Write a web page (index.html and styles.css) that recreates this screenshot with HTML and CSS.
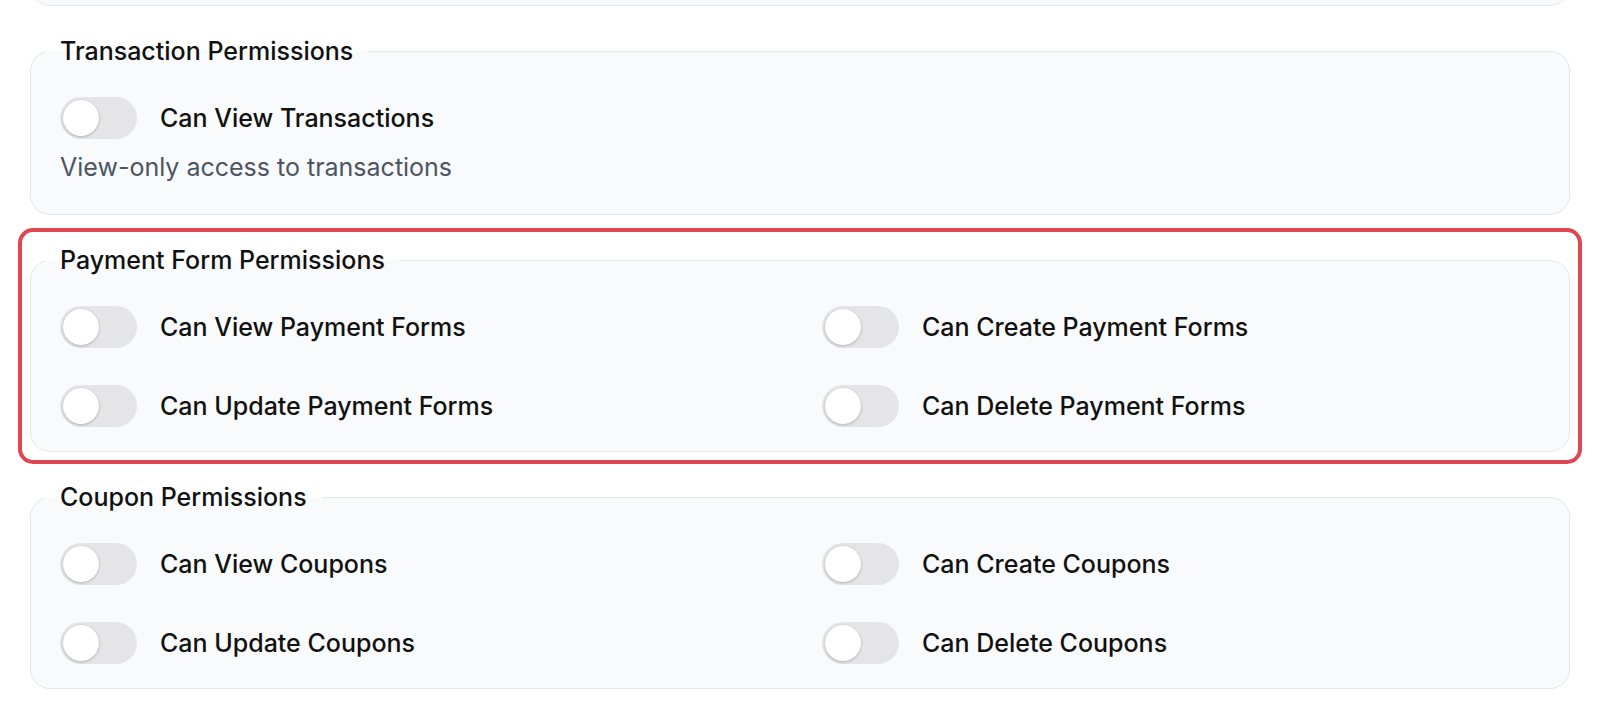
FILE: index.html
```html
<!DOCTYPE html>
<html lang="en">
<head>
<meta charset="utf-8">
<title>Permissions</title>
<link rel="stylesheet" href="styles.css">
</head>
<body>
<div class="page">
  <div class="prev-box"></div>

  <div class="section">
    <fieldset class="group">
      <legend>Transaction Permissions</legend>
      <div class="perm">
        <span class="toggle"><span class="knob"></span></span>
        <span class="label">Can View Transactions</span>
      </div>
      <p class="desc">View-only access to transactions</p>
    </fieldset>
  </div>

  <div class="section highlighted">
    <fieldset class="group">
      <legend>Payment Form Permissions</legend>
      <div class="grid">
        <div class="perm"><span class="toggle"><span class="knob"></span></span><span class="label">Can View Payment Forms</span></div>
        <div class="perm"><span class="toggle"><span class="knob"></span></span><span class="label">Can Create Payment Forms</span></div>
        <div class="perm"><span class="toggle"><span class="knob"></span></span><span class="label">Can Update Payment Forms</span></div>
        <div class="perm"><span class="toggle"><span class="knob"></span></span><span class="label">Can Delete Payment Forms</span></div>
      </div>
    </fieldset>
  </div>

  <div class="section">
    <fieldset class="group">
      <legend>Coupon Permissions</legend>
      <div class="grid">
        <div class="perm"><span class="toggle"><span class="knob"></span></span><span class="label">Can View Coupons</span></div>
        <div class="perm"><span class="toggle"><span class="knob"></span></span><span class="label">Can Create Coupons</span></div>
        <div class="perm"><span class="toggle"><span class="knob"></span></span><span class="label">Can Update Coupons</span></div>
        <div class="perm"><span class="toggle"><span class="knob"></span></span><span class="label">Can Delete Coupons</span></div>
      </div>
    </fieldset>
  </div>
</div>
</body>
</html>
```

FILE: styles.css
```css
* { box-sizing: border-box; }

html, body {
  margin: 0;
  background: #ffffff;
  font-family: Inter, "Noto Sans", "Liberation Sans", sans-serif;
  color: #111111;
}

.page {
  padding: 0 30px;
  display: flex;
  flex-direction: column;
  gap: 25px;
  overflow: hidden;
  height: 720px;
}

.prev-box {
  flex: none;
  height: 60px;
  margin-top: -54px;
  border: 1px solid #e4e6ea;
  border-radius: 20px;
  background: #f9fafb;
}

.section {
  flex: none;
}

.section.highlighted {
  border-radius: 3px;
  outline: 4px solid #de4651;
  outline-offset: 8px;
}

.group {
  margin: 0;
  min-width: 0;
  border: 1px solid #e4e6ea;
  border-radius: 20px;
  background: #f9fafb;
  padding: 26px 29px 24px;
}

.group legend {
  padding: 0 15px;
  margin-left: -15px;
  font-size: 25px;
  line-height: 40px;
  font-weight: 500;
  color: #111111;
}

.grid {
  display: grid;
  grid-template-columns: 1fr 1fr;
  column-gap: 44px;
  row-gap: 37px;
}

.perm {
  display: flex;
  align-items: center;
  gap: 23px;
  height: 42px;
}

.toggle {
  flex: none;
  width: 77px;
  height: 42px;
  border-radius: 21px;
  background: #e5e5e7;
  padding: 3px;
  display: flex;
  align-items: center;
}

.knob {
  width: 36px;
  height: 36px;
  border-radius: 50%;
  background: #ffffff;
  box-shadow: 0 1px 3px rgba(0, 0, 0, 0.22), 0 0 1px rgba(0, 0, 0, 0.1);
}

.label {
  font-size: 25px;
  font-weight: 500;
  color: #111111;
  white-space: nowrap;
}

.desc {
  margin: 12px 0 7px;
  font-size: 25px;
  line-height: 32px;
  color: #4b5563;
}
```
